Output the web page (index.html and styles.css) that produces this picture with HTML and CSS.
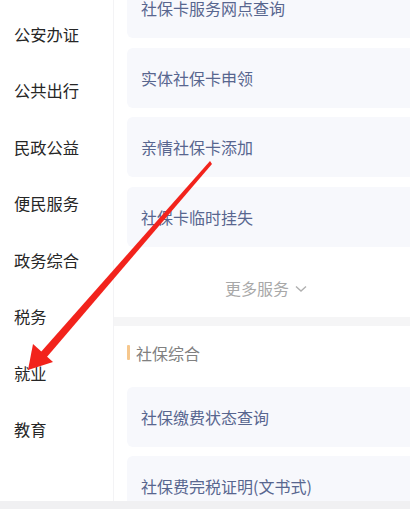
FILE: index.html
```html
<!DOCTYPE html>
<html lang="zh">
<head>
<meta charset="utf-8">
<link rel="stylesheet" href="styles.css">
</head>
<body>
<div class="page">
  <div class="top">
    <nav class="sidebar">
      <div class="nav-item">公安办证</div>
      <div class="nav-item">公共出行</div>
      <div class="nav-item">民政公益</div>
      <div class="nav-item">便民服务</div>
      <div class="nav-item">政务综合</div>
      <div class="nav-item">税务</div>
      <div class="nav-item">就业</div>
      <div class="nav-item">教育</div>
    </nav>
    <main class="main">
      <div class="section first">
        <div class="card">社保卡服务网点查询</div>
        <div class="card">实体社保卡申领</div>
        <div class="card">亲情社保卡添加</div>
        <div class="card">社保卡临时挂失</div>
        <div class="more">更多服务 <svg class="chev" width="12" height="8" viewBox="0 0 12 8"><path d="M1 1.5 L6 6 L11 1.5" fill="none" stroke="#b0b0b0" stroke-width="1.4"/></svg></div>
      </div>
      <div class="band"></div>
      <div class="section">
        <div class="sec-title"><span class="bar"></span>社保综合</div>
        <div class="card">社保缴费状态查询</div>
        <div class="card">社保费完税证明(文书式)</div>
      </div>
    </main>
  </div>
  <div class="bottom-band"></div>
  <svg class="arrow" width="410" height="509" viewBox="0 0 410 509">
    <path d="M210 161 L212 164 L46 358 L40 353 Z" fill="#f2231c"/>
    <path d="M28 370 L33 344 L43 353 L53 362 Z" fill="#f2231c"/>
  </svg>
</div>
</body>
</html>
```
FILE: styles.css
```css
* { box-sizing: border-box; }
html, body { margin: 0; padding: 0; }
body {
  width: 410px;
  height: 509px;
  overflow: hidden;
  background: #fff;
  font-family: "Noto Sans CJK SC", "Noto Sans", sans-serif;
}
.page {
  position: relative;
  width: 410px;
  height: 509px;
  display: flex;
  flex-direction: column;
}
.top {
  height: 501px;
  display: flex;
  overflow: hidden;
}
.sidebar {
  width: 114px;
  flex: none;
  border-right: 1px solid #f3f3f5;
  padding-top: 6px;
}
.nav-item {
  height: 56.45px;
  line-height: 56px;
  padding-left: 14px;
  font-size: 16.3px;
  color: #262626;
}
.main {
  flex: 1;
  display: flex;
  flex-direction: column;
  margin-top: -22px;
}
.section {
  padding-left: 13px;
  display: flex;
  flex-direction: column;
  gap: 9.5px;
}
.card {
  height: 60px;
  background: #f7f8fc;
  border-radius: 6px 0 0 6px;
  padding-left: 14px;
  display: flex;
  align-items: center;
  font-size: 16px;
  color: #58668f;
  flex: none;
}
.more {
  margin-top: -9.5px;
  height: 70px;
  padding-top: 30px;
  padding-left: 98px;
  font-size: 16px;
  line-height: 22px;
  color: #a8a8a8;
  display: flex;
  align-items: flex-start;
  gap: 6px;
}
.chev { margin-top: 8px; }
.band {
  height: 9px;
  background: #f5f5f6;
  flex: none;
}
.sec-title {
  height: 61px;
  margin-bottom: -9.5px;
  display: flex;
  align-items: center;
  padding-bottom: 7px;
  font-size: 16px;
  color: #808080;
}
.bar {
  width: 3px;
  height: 15px;
  background: #f6c78d;
  border-radius: 1px;
  margin-right: 6px;
}
.bottom-band {
  height: 8px;
  background: #f0f0f2;
}
.arrow {
  position: absolute;
  left: 0;
  top: 0;
  pointer-events: none;
}
```
